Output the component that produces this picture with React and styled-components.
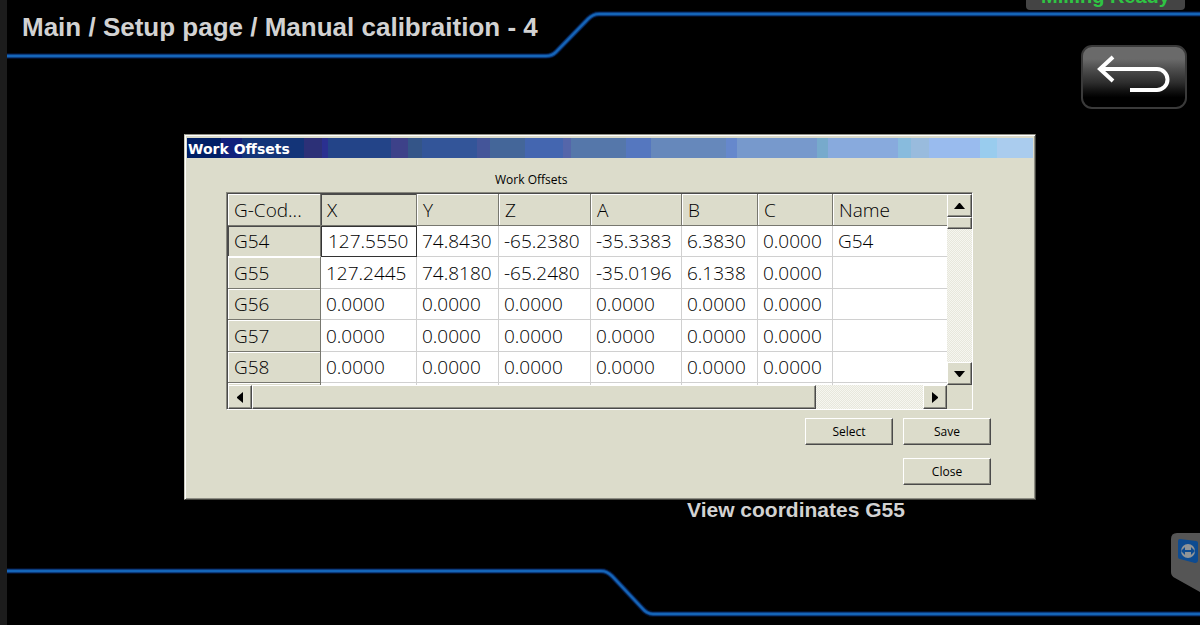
import React from "react";
import styled, { createGlobalStyle, css } from "styled-components";

const face = "#dcdccb";
const shade = "#77776f";
const dark = "#4a4a4a";
const uiFont = '"Open Sans", "Noto Sans", sans-serif';

const GlobalStyle = createGlobalStyle`
  * { box-sizing: border-box; }
  body { margin: 0; background: #000; }
  button { font: inherit; cursor: pointer; }
`;

const Page = styled.div`
  position: relative;
  display: flex;
  flex-direction: column;
  min-height: 100vh;
  background: #000;
  border-left: 7px solid #1c1c1c;
  font-family: "Liberation Sans", Arial, sans-serif;
  color: #d2d2d2;
  overflow: hidden;
`;

const Header = styled.header`
  display: flex;
  align-items: flex-start;
`;

const Line = styled.div`
  height: 8px;
  background: linear-gradient(
    #000 0 1px, #020f2a 1px 2px, #0c3c7c 2px 3px, #1565b8 3px 5px,
    #0c3c7c 5px 6px, #020f2a 6px 7px, #000 7px
  );
`;

const TitleArea = styled.div`
  flex: none;
  width: 536px;
`;

const Title = styled.h1`
  margin: 0;
  height: 52px;
  padding: 12px 0 0 15px;
  font-size: 26px;
  line-height: 30px;
  font-weight: bold;
  white-space: nowrap;
`;

const Slant = styled.svg`
  flex: none;
  display: block;
  width: 60px;
`;

const TopRight = styled.div`
  flex: 1;
  display: flex;
  flex-direction: column;
`;

const Status = styled.div`
  align-self: flex-end;
  display: flex;
  align-items: flex-end;
  justify-content: center;
  width: 159px;
  height: 10px;
  margin-right: 15px;
  border-radius: 0 0 4px 4px;
  background: #444;
  color: #2fc443;
  font-size: 20px;
  line-height: 24px;
  font-weight: bold;
  overflow: hidden;
  padding-bottom: 2px;
`;

const BackButton = styled.button`
  align-self: flex-end;
  width: 106px;
  height: 64px;
  margin: 27px 13px 0 0;
  padding: 0;
  border: 2px solid #3a3a3a;
  border-radius: 11px;
  background: linear-gradient(#6a6a6a 0 20%, #4c4c4c 38%, #2c2c2c 60%, #101010 74%, #000 84%);
  svg { display: block; }
`;

const Main = styled.main`
  flex: 1;
  padding: 25px 164px 0 177px;
`;

const Dialog = styled.section`
  padding: 3px 2px 14px 1px;
  border: 1px solid;
  border-color: #8e8e84 #44443e #44443e #c9c9bb;
  box-shadow: inset 1px 1px #fff, inset -1px -1px #8e8e84;
  background: ${face};
  color: #000;
  font-family: ${uiFont};
`;

const bands = [
  ["#001f66", 4], ["#10207c", 6.5], ["#133478", 13.8], ["#2c3077", 16], ["#2a3090", 16.7],
  ["#234488", 24.1], ["#3d4189", 26.1], ["#345588", 27.8], ["#335599", 34.3], ["#445599", 35.8],
  ["#446699", 40], ["#4466b0", 44.4], ["#5566aa", 45.4], ["#5577aa", 51.9], ["#5577bf", 54.8],
  ["#6688bb", 63.7], ["#6688cc", 65], ["#7799cc", 74.5], ["#77aacc", 75.8], ["#88aadd", 84],
  ["#88bbdd", 85.6], ["#99bbdd", 87.7], ["#99bbee", 93.7], ["#99ccee", 95.8], ["#aaccee", 100],
];
const stops = bands
  .map(([c, end], i) => `${c} ${i ? bands[i - 1][1] : 0}% ${end}%`)
  .join(", ");

const TitleBar = styled.h2`
  margin: 0 0 0 1px;
  padding-left: 1px;
  height: 20px;
  font-family: "DejaVu Sans", Verdana, sans-serif;
  font-size: 14px;
  line-height: 22px;
  font-weight: bold;
  color: #fff;
  background: linear-gradient(90deg, ${stops});
`;

const DialogBody = styled.div`
  padding: 0 42px 0 40px;
`;

const Caption = styled.div`
  height: 34px;
  padding: 13px 0 0 269px;
  font-size: 12px;
  line-height: 18px;
`;

const Frame = styled.div`
  display: grid;
  grid-template-columns: 1fr 25px;
  margin-right: 18px;
  border: 1px solid;
  border-color: #88887e #fff #fff #88887e;
  box-shadow: inset 1px 1px ${dark};
  padding: 1px 0 0 1px;
`;

const Table = styled.table`
  width: 100%;
  table-layout: fixed;
  border-collapse: separate;
  border-spacing: 0;
  background: #fff;
  font-size: 19px;
  line-height: 26px;
  font-weight: 300;
  white-space: nowrap;
`;

const HeadRow = styled.tr`
  height: 32px;
`;

const Row = styled.tr`
  height: 31px;
  &:nth-child(even) { height: 32px; }
`;

const TailRow = styled.tr`
  height: 2px;
  th, td { height: 2px; padding: 0; border-bottom: 0; }
`;

const Col = styled.col`
  width: ${(p) => p.$w}px;
`;

const headCell = css`
  padding: 0 0 0 6px;
  text-align: left;
  font-weight: 300;
  background: ${face};
  border-right: 1px solid ${shade};
  border-bottom: 1px solid ${shade};
  box-shadow: inset 1px 1px ${(p) => (p.$active ? dark : "#fff")};
`;

const ColHead = styled.th`
  ${headCell}
  &:last-child { border-right: 0; }
`;

const RowHead = styled.th`
  ${headCell}
  border-bottom-color: ${(p) => (p.$active ? "#fff" : shade)};
`;

const Cell = styled.td`
  padding: 0 0 0 5px;
  border-right: 1px solid #d0d0d0;
  border-bottom: 1px solid #d0d0d0;
  &:last-child { border-right: 0; }
  ${(p) => p.$active && css`
    padding-left: 7px;
    outline: 1px solid #333;
    outline-offset: -1px;
  `}
`;

const raised = css`
  border: 1px solid;
  border-color: #fff ${dark} ${dark} #fff;
  box-shadow: inset -1px -1px #8e8e84;
  background: ${face};
`;

const Track = styled.div`
  display: flex;
  flex-direction: ${(p) => (p.$vertical ? "column" : "row")};
  height: ${(p) => (p.$vertical ? "auto" : "24px")};
  background: repeating-conic-gradient(#f6f6f0 0 25%, #e7e7dc 0 50%) 0 0 / 2px 2px;
`;

const Arrow = styled.button`
  ${raised}
  flex: none;
  display: grid;
  place-items: center;
  width: ${(p) => (p.$vertical ? 25 : 24)}px;
  height: ${(p) => (p.$vertical ? 23 : 24)}px;
  padding: 0;
`;

const Gutter = styled.div`
  flex: 1;
  display: flex;
  flex-direction: ${(p) => (p.$vertical ? "column" : "row")};
`;

const Thumb = styled.div`
  ${raised}
  ${(p) => (p.$vertical ? css`height: 12px;` : css`width: 84%;`)}
`;

const Actions = styled.div`
  display: grid;
  grid-template-columns: 88px 88px;
  justify-content: end;
  gap: 13px 10px;
  padding-top: 8px;
`;

const Action = styled.button`
  ${raised}
  height: 27px;
  padding: 0;
  color: #000;
  font-size: 12px;
  line-height: 18px;
  ${(p) => p.$second && css`grid-column: 2;`}
`;

const ViewLabel = styled.p`
  margin: 0;
  padding-left: 503px;
  font-size: 21px;
  line-height: 20px;
  font-weight: bold;
  white-space: nowrap;
`;

const Footer = styled.footer`
  display: flex;
  height: 58px;
`;

const FootLeft = styled(Line)`
  flex: none;
  width: 590px;
`;

const FootRight = styled(Line)`
  flex: 1;
  margin-top: 43px;
`;

const RemoteTab = styled.button`
  position: absolute;
  right: 0;
  bottom: 32px;
  width: 29px;
  height: 60px;
  padding: 0;
  border: 0;
  background: none;
  svg { display: block; }
`;

function SlantLine({ height, d }) {
  return (
    <Slant height={height} viewBox={`0 0 60 ${height}`} fill="none" aria-hidden="true">
      <path d={d} stroke="#020f2a" strokeWidth="6" />
      <path d={d} stroke="#0c3c7c" strokeWidth="4" />
      <path d={d} stroke="#1565b8" strokeWidth="2" />
    </Slant>
  );
}

const triangles = {
  up: "M0 6L5 0H6L11 6Z",
  down: "M0 0L5 6H6L11 0Z",
  left: "M6 0L0 5V6L6 11Z",
  right: "M0 0L6 5V6L0 11Z",
};

function ScrollArrow({ dir }) {
  const vertical = dir === "up" || dir === "down";
  return (
    <Arrow $vertical={vertical} aria-label={`Scroll ${dir}`}>
      <svg width={vertical ? 11 : 6} height={vertical ? 6 : 11}>
        <path d={triangles[dir]} />
      </svg>
    </Arrow>
  );
}

const heads = ["G-Cod...", "X", "Y", "Z", "A", "B", "C", "Name"];
const zeros = ["0.0000", "0.0000", "0.0000", "0.0000", "0.0000", "0.0000", ""];
const rows = [
  ["G54", ["127.5550", "74.8430", "-65.2380", "-35.3383", "6.3830", "0.0000", "G54"]],
  ["G55", ["127.2445", "74.8180", "-65.2480", "-35.0196", "6.1338", "0.0000", ""]],
  ["G56", zeros],
  ["G57", zeros],
  ["G58", zeros],
];

export default function App() {
  return (
    <Page>
      <GlobalStyle />
      <Header>
        <TitleArea>
          <Title>Main / Setup page / Manual calibraition - 4</Title>
          <Line />
        </TitleArea>
        <SlantLine height={60} d="M0 56H3Q9 56 13 52L45 19Q50 14 56 14H60" />
        <TopRight>
          <Status>Milling Ready</Status>
          <Line />
          <BackButton aria-label="Back">
            <svg width="102" height="60" viewBox="0 0 102 60" fill="none" stroke="#fff" strokeWidth="4">
              <path d="M17 22H74A10 10 0 0 1 74 43H47" />
              <path d="M30 10L17 22L30 34" />
            </svg>
          </BackButton>
        </TopRight>
      </Header>

      <Main>
        <Dialog aria-label="Work Offsets">
          <TitleBar>Work Offsets</TitleBar>
          <DialogBody>
            <Caption>Work Offsets</Caption>
            <Frame>
              <Table>
                <colgroup>
                  {[93, 96, 82, 92, 91, 76, 75].map((w, i) => <Col key={i} $w={w} />)}
                  <col />
                </colgroup>
                <thead>
                  <HeadRow>
                    {heads.map((h, i) => <ColHead key={h} scope="col" $active={i === 1}>{h}</ColHead>)}
                  </HeadRow>
                </thead>
                <tbody>
                  {rows.map(([code, cells], r) => (
                    <Row key={code}>
                      <RowHead scope="row" $active={r === 0}>{code}</RowHead>
                      {cells.map((v, c) => <Cell key={c} $active={r === 0 && c === 0}>{v}</Cell>)}
                    </Row>
                  ))}
                  <TailRow aria-hidden="true">
                    <RowHead />
                    {zeros.map((_, c) => <Cell key={c} />)}
                  </TailRow>
                </tbody>
              </Table>
              <Track $vertical>
                <ScrollArrow dir="up" />
                <Gutter $vertical><Thumb $vertical /></Gutter>
                <ScrollArrow dir="down" />
              </Track>
              <Track>
                <ScrollArrow dir="left" />
                <Gutter><Thumb /></Gutter>
                <ScrollArrow dir="right" />
              </Track>
            </Frame>
            <Actions>
              <Action>Select</Action>
              <Action>Save</Action>
              <Action $second>Close</Action>
            </Actions>
          </DialogBody>
        </Dialog>
        <ViewLabel>View coordinates G55</ViewLabel>
      </Main>

      <Footer>
        <FootLeft />
        <SlantLine height={58} d="M0 4H4Q10 4 15 9L45 41Q50 47 56 47H60" />
        <FootRight />
      </Footer>

      <RemoteTab aria-label="Remote control">
        <svg width="29" height="60" viewBox="0 0 29 60">
          <path d="M0 6Q0 0 6 0H29V59L4 45Q0 43 0 39Z" fill="#555" />
          <path d="M9 6L25 8Q27 8 27 10V27Q27 30 24 30L9 26Q7 26 7 24V8Q7 6 9 6Z" fill="#0d4b91" />
          <circle cx="17" cy="18" r="7" fill="#8f9498" />
          <path d="M10 18L14 14V17H20V14L24 18L20 22V19H14V22Z" fill="#0d4b91" />
        </svg>
      </RemoteTab>
    </Page>
  );
}
